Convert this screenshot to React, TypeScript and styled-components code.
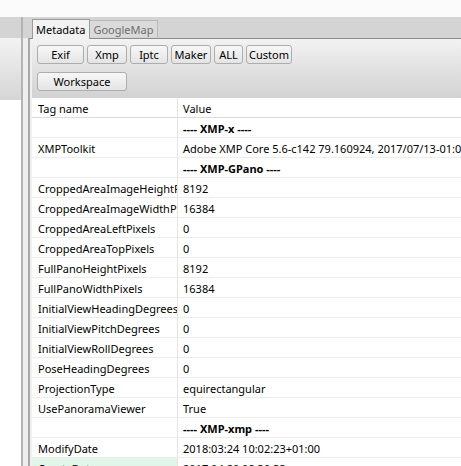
import React from "react";
import styled, { createGlobalStyle } from "styled-components";

const GlobalStyle = createGlobalStyle`
  html, body {
    margin: 0;
    padding: 0;
    background: #ffffff;
  }
  body {
    font-family: "Noto Sans", "Open Sans", sans-serif;
    font-size: 11px;
    color: #000000;
  }
`;

type Row = {
  tag?: string;
  value: string;
  section?: boolean;
  selected?: boolean;
};

const rows: Row[] = [
  { value: "---- XMP-x ----", section: true },
  { tag: "XMPToolkit", value: "Adobe XMP Core 5.6-c142 79.160924, 2017/07/13-01:06:39" },
  { value: "---- XMP-GPano ----", section: true },
  { tag: "CroppedAreaImageHeightPixels", value: "8192" },
  { tag: "CroppedAreaImageWidthPixels", value: "16384" },
  { tag: "CroppedAreaLeftPixels", value: "0" },
  { tag: "CroppedAreaTopPixels", value: "0" },
  { tag: "FullPanoHeightPixels", value: "8192" },
  { tag: "FullPanoWidthPixels", value: "16384" },
  { tag: "InitialViewHeadingDegrees", value: "0" },
  { tag: "InitialViewPitchDegrees", value: "0" },
  { tag: "InitialViewRollDegrees", value: "0" },
  { tag: "PoseHeadingDegrees", value: "0" },
  { tag: "ProjectionType", value: "equirectangular" },
  { tag: "UsePanoramaViewer", value: "True" },
  { value: "---- XMP-xmp ----", section: true },
  { tag: "ModifyDate", value: "2018:03:24 10:02:23+01:00" },
  { tag: "CreateDate", value: "2017:04:20 09:30:33", selected: true },
];

const filters = [
  { label: "Exif", width: 47 },
  { label: "Xmp", width: 40 },
  { label: "Iptc", width: 38 },
  { label: "Maker", width: 40 },
  { label: "ALL", width: 29 },
  { label: "Custom", width: 46 },
];

export default function App() {
  return (
    <>
      <GlobalStyle />
      <Window>
        <TopStrip />
        <Main>
          <SidePanel>
            <SideTop />
            <SideBox />
          </SidePanel>
          <Splitter />
          <Content>
            <TabBar>
              <Tab $active>Metadata</Tab>
              <Tab>GoogleMap</Tab>
            </TabBar>
            <Pane>
              <Toolbar>
                <ButtonRow>
                  {filters.map((f) => (
                    <Button key={f.label} $width={f.width}>
                      {f.label}
                    </Button>
                  ))}
                </ButtonRow>
                <ButtonRow>
                  <Button $width={90}>Workspace</Button>
                </ButtonRow>
              </Toolbar>
              <Table>
                <HeaderRow>
                  <TagCell>Tag name</TagCell>
                  <ValueCell>Value</ValueCell>
                </HeaderRow>
                {rows.map((r, i) => (
                  <DataRow key={i}>
                    <TagCell $selected={r.selected}>{r.tag ?? ""}</TagCell>
                    <ValueCell $bold={r.section}>{r.value}</ValueCell>
                  </DataRow>
                ))}
              </Table>
            </Pane>
          </Content>
        </Main>
      </Window>
    </>
  );
}

const Window = styled.div`
  width: 461px;
  height: 466px;
  overflow: hidden;
  display: flex;
  flex-direction: column;
  background: #ffffff;
`;

const TopStrip = styled.div`
  height: 17px;
  flex-shrink: 0;
  background: #fbfbfb;
`;

const Main = styled.div`
  flex: 1;
  display: flex;
  background: #d4d4d4;
`;

const SidePanel = styled.div`
  width: 21px;
  flex-shrink: 0;
  display: flex;
  flex-direction: column;
  border-right: 2px solid #b4b4b4;
`;

const SideTop = styled.div`
  height: 21px;
  flex-shrink: 0;
  background: #d4d4d4;
`;

const SideBox = styled.div`
  flex: 1;
  background: linear-gradient(
    to bottom,
    #f2f2f2 0px,
    #d6d6d6 62px,
    #ffffff 62px,
    #ffffff 100%
  );
`;

const Splitter = styled.div`
  width: 5px;
  flex-shrink: 0;
  background: linear-gradient(to bottom, #d4d4d4 0px, #d4d4d4 21px, #eeeeee 21px);
`;

const Content = styled.div`
  flex: 1;
  min-width: 0;
  display: flex;
  flex-direction: column;
`;

const TabBar = styled.div`
  height: 21px;
  flex-shrink: 0;
  display: flex;
  align-items: flex-end;
  padding-left: 4px;
  background: #d4d4d4;
`;

const Tab = styled.div<{ $active?: boolean }>`
  box-sizing: border-box;
  height: ${(p) => (p.$active ? "20px" : "17px")};
  margin-bottom: ${(p) => (p.$active ? "-1px" : "1px")};
  padding: 0 4px 0 3px;
  display: flex;
  align-items: center;
  border: 1px solid ${(p) => (p.$active ? "#9a9a9a" : "#b8b8b8")};
  border-bottom: none;
  border-left: ${(p) => (p.$active ? "1px solid #9a9a9a" : "none")};
  background: ${(p) => (p.$active ? "#f2f2f2" : "#dadada")};
  color: ${(p) => (p.$active ? "#000000" : "#6e6e6e")};
  position: relative;
  z-index: ${(p) => (p.$active ? 1 : 0)};
`;

const Pane = styled.div`
  flex: 1;
  display: flex;
  flex-direction: column;
  border-top: 1px solid #8c8c8c;
  border-left: 2px solid #a8a8a8;
  padding-left: 2px;
  background: #f0f0f0;
`;

const Toolbar = styled.div`
  height: 59px;
  flex-shrink: 0;
  box-sizing: border-box;
  padding: 6px 0 0 5px;
  display: flex;
  flex-direction: column;
  gap: 8px;
  background: linear-gradient(to bottom, #f2f2f2, #d2d2d2);
`;

const ButtonRow = styled.div`
  display: flex;
  gap: 3px;
`;

const Button = styled.div<{ $width: number }>`
  box-sizing: border-box;
  width: ${(p) => p.$width}px;
  height: 19px;
  display: flex;
  align-items: center;
  justify-content: center;
  border: 1px solid #adadad;
  border-radius: 3px;
  background: linear-gradient(to bottom, #f7f7f7, #e4e4e4);
  color: #000000;
`;

const Table = styled.div`
  flex: 1;
  background: #ffffff;
  display: flex;
  flex-direction: column;
`;

const DataRow = styled.div`
  display: flex;
  height: 20px;
  flex-shrink: 0;
  box-sizing: border-box;
  border-bottom: 1px solid #ececec;
`;

const HeaderRow = styled(DataRow)`
  border-bottom: 1px solid #dcdcdc;
`;

const TagCell = styled.div<{ $selected?: boolean }>`
  width: 146px;
  flex-shrink: 0;
  box-sizing: border-box;
  padding-left: 6px;
  padding-top: 1px;
  display: flex;
  align-items: center;
  white-space: nowrap;
  overflow: hidden;
  border-right: 1px solid #e4e4e4;
  background: ${(p) => (p.$selected ? "#e2f5e9" : "transparent")};
`;

const ValueCell = styled.div<{ $bold?: boolean }>`
  flex: 1;
  min-width: 0;
  padding-left: 5px;
  padding-top: 1px;
  display: flex;
  align-items: center;
  white-space: nowrap;
  overflow: hidden;
  font-weight: ${(p) => (p.$bold ? 700 : 400)};
`;
